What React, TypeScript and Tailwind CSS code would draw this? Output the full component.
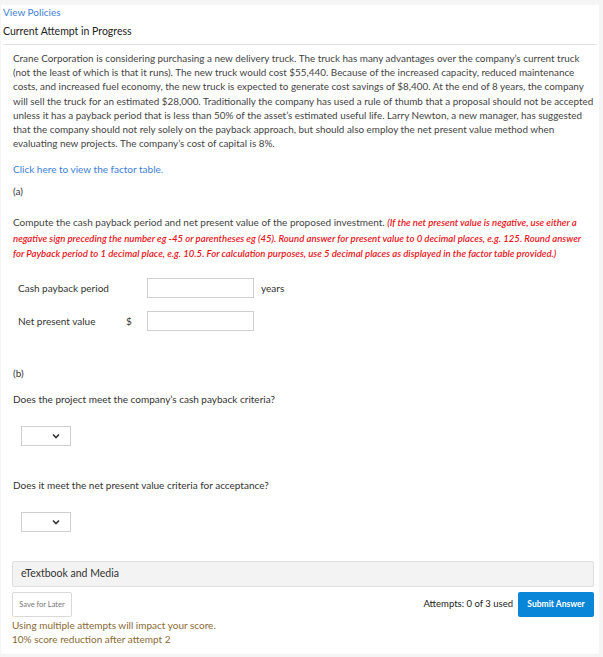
import React from 'react';

const Select = () => (
  <div className="ml-[8px] flex h-[20px] w-[50px] items-center justify-end border border-[#cfcfcf] bg-white pr-[10px]">
    <svg width="8" height="6" viewBox="0 0 8 6">
      <path d="M1 1.5 L4 4.5 L7 1.5" fill="none" stroke="#333" strokeWidth="1.6" />
    </svg>
  </div>
);

const App: React.FC = () => {
  return (
    <div className="min-h-[657px] w-[603px] bg-[#f5f5f5] pt-[5px] pb-[6px] pl-px pr-[4px] font-['Lato',sans-serif] text-[#333]">
      <div className="min-h-[646px] bg-white px-[2px] pb-[8px]">
        <div className="pt-0 text-[10px] leading-[14px] text-[#3d7fd6]">View Policies</div>
        <div className="mt-[5px] text-[10.5px] leading-[14px] text-[#222]">Current Attempt in Progress</div>
        <div className="mt-[6px] border-t border-[#e4e4e4]" />

        <div className="pl-[10px] pr-[2px] pt-[6px]">
          <p className="text-[9.9px] leading-[14.2px] text-[#444]">
            Crane Corporation is considering purchasing a new delivery truck. The truck has many advantages over the company’s current truck (not the least of which is that it runs). The new truck would cost $55,440. Because of the increased capacity, reduced maintenance costs, and increased fuel economy, the new truck is expected to generate cost savings of $8,400. At the end of 8 years, the company will sell the truck for an estimated $28,000. Traditionally the company has used a rule of thumb that a proposal should not be accepted unless it has a payback period that is less than 50% of the asset’s estimated useful life. Larry Newton, a new manager, has suggested that the company should not rely solely on the payback approach, but should also employ the net present value method when evaluating new projects. The company’s cost of capital is 8%.
          </p>
          <div className="mt-[12px] text-[10px] leading-[14px] text-[#3d7fd6]">Click here to view the factor table.</div>
          <div className="mt-[8px] text-[10px] leading-[14px]">(a)</div>
          <p className="mt-[17px] pr-[1px] text-[10px] leading-[14.2px] text-[#444]">
            Compute the cash payback period and net present value of the proposed investment.{' '}
            <span className="italic font-semibold text-[9.6px] text-[#e8151b]">
              (If the net present value is negative, use either a negative sign preceding the number eg -45 or parentheses eg (45). Round answer for present value to 0 decimal places, e.g. 125. Round answer for Payback period to 1 decimal place, e.g. 10.5. For calculation purposes, use 5 decimal places as displayed in the factor table provided.)
            </span>
          </p>

          <div className="mt-[17px] flex flex-col gap-[13px] text-[10px] text-[#333]">
            <div className="flex items-center">
              <div className="w-[134px] pl-[5px]">Cash payback period</div>
              <div className="h-[20px] w-[107px] border border-[#cfcfcf] bg-white" />
              <div className="ml-[7px]">years</div>
            </div>
            <div className="flex items-center">
              <div className="w-[113px] pl-[5px]">Net present value</div>
              <div className="w-[21px]">$</div>
              <div className="h-[20px] w-[107px] border border-[#cfcfcf] bg-white" />
            </div>
          </div>

          <div className="mt-[35px] text-[10px] leading-[14px]">(b)</div>
          <div className="mt-[12px] text-[10px] leading-[14px]">Does the project meet the company’s cash payback criteria?</div>
          <div className="mt-[20px]"><Select /></div>
          <div className="mt-[32px] text-[10px] leading-[14px]">Does it meet the net present value criteria for acceptance?</div>
          <div className="mt-[20px]"><Select /></div>
        </div>

        <div className="mt-[29px] pl-[9px] pr-[3px]">
          <div className="flex h-[26px] items-center rounded-[2px] border border-[#dedede] bg-[#f3f3f3] px-[8px] text-[10.5px] text-[#333]">
            eTextbook and Media
          </div>
          <div className="mt-[5px] flex items-center justify-between">
            <div className="flex h-[25px] w-[60px] items-center justify-center rounded-[2px] border border-[#d9d9d9] bg-white text-[7.5px] text-[#777]">
              Save for Later
            </div>
            <div className="flex items-center gap-[5px]">
              <div className="text-[9.5px] text-[#222]">Attempts: 0 of 3 used</div>
              <div className="flex h-[25px] w-[76px] items-center justify-center rounded-[2px] bg-[#0a86d9] text-[8.5px] font-bold text-white">
                Submit Answer
              </div>
            </div>
          </div>
          <div className="mt-[1px] text-[10px] leading-[14px] text-[#8a6a35]">
            <div>Using multiple attempts will impact your score.</div>
            <div>10% score reduction after attempt 2</div>
          </div>
        </div>
      </div>
    </div>
  );
};

export default App;
